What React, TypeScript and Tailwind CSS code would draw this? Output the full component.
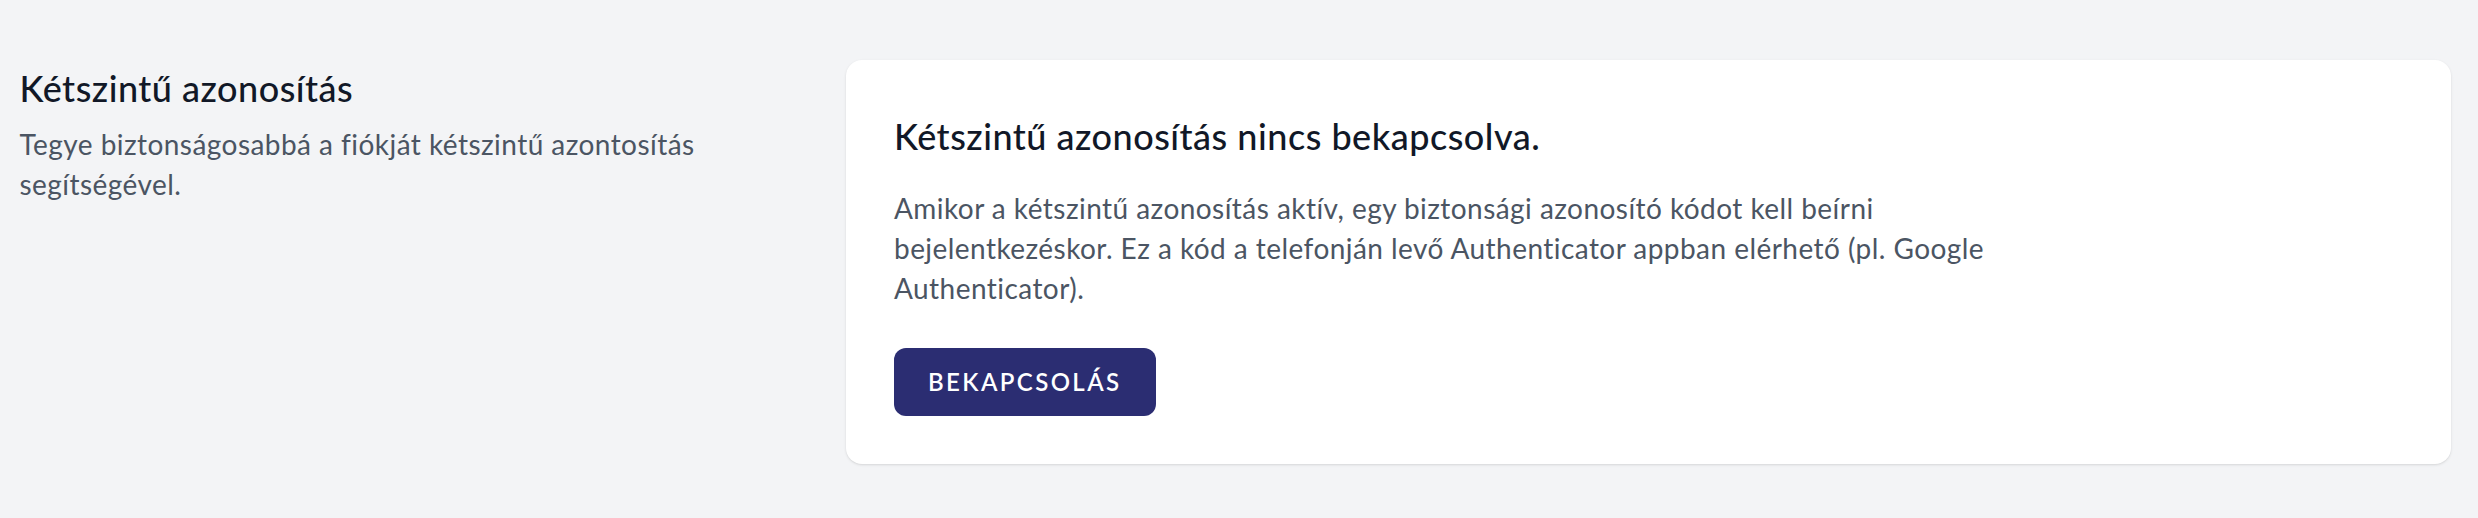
export default function App() {
  return (
    <div
      className="min-h-screen bg-[#f3f4f6] pl-[19.5px] pr-[27px] pt-[60px]"
      style={{ fontFamily: "Lato, 'Noto Sans', sans-serif" }}
    >
      <div className="grid grid-cols-3 gap-[48px]">
        {/* Section title */}
        <div>
          <h3 className="text-[36px] leading-[56px] font-medium tracking-[0.014em] text-[#111827]">
            Kétszintű azonosítás
          </h3>
          <p className="mt-[8px] text-[28px] leading-[40px] tracking-[0.016em] text-[#4b5563]">
            Tegye biztonságosabbá a fiókját kétszintű azontosítás segítségével.
          </p>
        </div>

        {/* Card */}
        <div className="col-span-2">
          <div className="bg-white p-[48px] rounded-[16px] shadow">
            <h3 className="text-[36px] leading-[56px] font-medium tracking-[0.014em] text-[#111827]">
              Kétszintű azonosítás nincs bekapcsolva.
            </h3>
            <div className="mt-[24px] max-w-[1152px] text-[28px] leading-[40px] tracking-[0.016em] text-[#4b5563]">
              <p>
                Amikor a kétszintű azonosítás aktív, egy biztonsági azonosító kódot kell beírni
                bejelentkezéskor. Ez a kód a telefonján levő Authenticator appban elérhető (pl.
                Google Authenticator).
              </p>
            </div>
            <div className="mt-[40px]">
              <button
                type="button"
                className="inline-flex items-center px-[32px] py-[16px] bg-[#2b2d72] border-2 border-transparent rounded-[12px] text-[24px] leading-[32px] font-semibold text-white uppercase tracking-[0.1em]"
              >
                Bekapcsolás
              </button>
            </div>
          </div>
        </div>
      </div>
    </div>
  );
}
